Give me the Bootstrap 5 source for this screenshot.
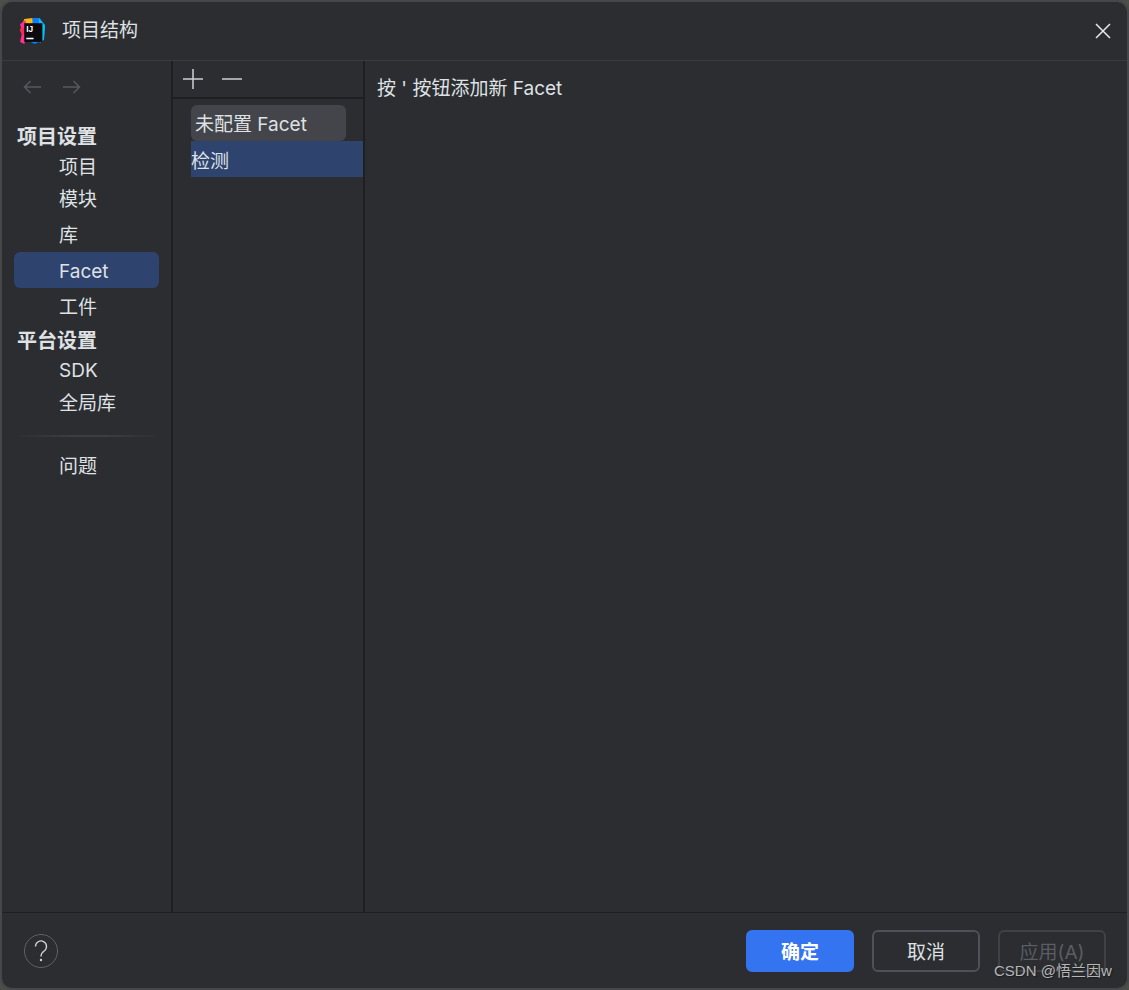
<!DOCTYPE html>
<html lang="zh">

<head>
    <meta charset="UTF-8">
    <meta name="viewport" content="width=device-width, initial-scale=1">
    <title>项目结构</title>
    <link href="https://cdn.jsdelivr.net/npm/bootstrap@5.3.3/dist/css/bootstrap.min.css" rel="stylesheet">
    <style>
        html, body { height: 100%; }
        body {
            background: #4a5048;
            overflow: hidden;
            font-family: "Inter", "Noto Sans CJK SC", sans-serif;
            font-size: 19px;
            color: #dfe1e5;
        }
        .ide-window {
            width: 1129px;
            height: 990px;
            background: #2b2d30;
            border: 2px solid #45474a;
            border-radius: 12px;
        }
        .title-bar { height: 59px; border-bottom: 1px solid #393b40; }
        .title-text { margin-left: 17px; }
        .side-pane { width: 171px; border-right: 2px solid #1e1f22; }
        .mid-pane { width: 192px; border-right: 2px solid #1e1f22; }
        .arrow-row { height: 61px; padding: 0 0 9px 21px; gap: 20px; }
        .side-head { height: 30px; padding-left: 15px; font-size: 20px; font-weight: 700; line-height: 31px; }
        .side-head.second { height: 32px; line-height: 34px; }
        .side-item { height: 36px; line-height: 40px; padding-left: 57px; }
        .side-item.first { height: 28px; line-height: 32px; }
        .side-item.tight { height: 29px; line-height: 29px; }
        .side-item.global { line-height: 38px; }
        .side-item.last { line-height: 36px; }
        .side-item.active-item {
            background: #2e436e;
            border-radius: 6px;
            margin: 0 12px;
            padding-left: 45px;
        }
        .side-rule {
            height: 2px;
            margin: 14px 8px 12px 12px;
            background: linear-gradient(90deg, #2b2d30, #3c3e43 40%, #3c3e43 60%, #2b2d30);
        }
        .mid-tools { height: 38px; border-bottom: 2px solid #1e1f22; padding-left: 10px; gap: 19px; }
        .mid-list { padding: 6px 0 0 18px; }
        .facet-tag {
            width: 155px;
            height: 36px;
            line-height: 39px;
            background: #43454a;
            border-radius: 6px;
            padding-left: 4px;
        }
        .facet-pick { height: 36px; line-height: 41px; background: #2e436e; }
        .main-hint { padding: 13px 0 0 12px; line-height: 30px; }
        .foot-bar { height: 76px; border-top: 1px solid #1e1f22; padding: 0 21px 0 22px; }
        .help-ring { width: 34px; height: 34px; }
        .dlg-btn {
            width: 108px;
            height: 42px;
            padding: 6px 0 0;
            font-size: 19px;
            border-radius: 6px;
            color: #dfe1e5;
            background: transparent;
            border: 2px solid #4e5157;
        }
        .dlg-btn.ok { background: #3574f0; border-color: #3574f0; color: #fff; font-weight: 700; }
        .dlg-btn.off { border-color: #3f4145; color: #5a5d63; opacity: 1; }
        .dlg-gap { gap: 18px; }
        .csdn-mark {
            position: absolute;
            left: 994px;
            top: 961px;
            font-family: "Liberation Sans", "Noto Sans CJK SC", sans-serif;
            font-size: 15px;
            line-height: 20px;
            color: #b4b6b8;
            text-shadow: 1px 1px 1px #1c1d1f;
        }
    </style>
</head>

<body>
    <div class="ide-window d-flex flex-column overflow-hidden">
        <!-- barra de titulo -->
        <div class="title-bar d-flex align-items-center flex-shrink-0">
            <svg class="ms-3" width="27" height="27" viewBox="0 0 26 26">
                <polygon points="6,1 14,0 15,8 2,13" fill="#fdb60d"/>
                <polygon points="2,6 7,2 10,14 6,25 2,23 4,14" fill="#ff318c"/>
                <polygon points="2,10 9,9 9,17 3,15" fill="#fe2857"/>
                <polygon points="14,0 21,0 26,7 25,21 16,25 10,22 14,12" fill="#087cfa"/>
                <polygon points="20,0 26,7 25,21 21,24" fill="#07c3f2"/>
                <rect x="6" y="5" width="17.500" height="18" fill="#0b0b0f"/>
                <text x="8" y="13" font-family="Liberation Sans" font-size="8" font-weight="700" fill="#fff">IJ</text>
                <rect x="8" y="19" width="7" height="1.500" fill="#fff"/>
            </svg>
            <span class="title-text">项目结构</span>
            <svg class="ms-auto me-3" width="16" height="16" viewBox="0 0 16 16">
                <path d="M1 1 15 15M15 1 1 15" stroke="#e8e9eb" stroke-width="1.500" fill="none"/>
            </svg>
        </div>

        <div class="d-flex flex-grow-1">
            <!-- menu lateral -->
            <div class="side-pane flex-shrink-0">
                <div class="arrow-row d-flex align-items-center">
                    <svg width="19" height="14" viewBox="0 0 19 14"><path d="M18 7H1.500M7.500 1 1.500 7l6 6" stroke="#55585d" stroke-width="1.500" fill="none"/></svg>
                    <svg width="19" height="14" viewBox="0 0 19 14"><path d="M1 7h16.500M11.500 1l6 6-6 6" stroke="#55585d" stroke-width="1.500" fill="none"/></svg>
                </div>
                <div class="side-head">项目设置</div>
                <div class="side-item first">项目</div>
                <div class="side-item">模块</div>
                <div class="side-item">库</div>
                <div class="side-item active-item">Facet</div>
                <div class="side-item">工件</div>
                <div class="side-head second">平台设置</div>
                <div class="side-item tight">SDK</div>
                <div class="side-item global">全局库</div>
                <div class="side-rule"></div>
                <div class="side-item last">问题</div>
            </div>

            <!-- lista de facets -->
            <div class="mid-pane flex-shrink-0">
                <div class="mid-tools d-flex align-items-center">
                    <svg width="20" height="20" viewBox="0 0 20 20"><path d="M10 0V20M0 10H20" stroke="#ced0d6" stroke-width="1.500" fill="none"/></svg>
                    <svg width="20" height="20" viewBox="0 0 20 20"><path d="M0 10H20" stroke="#ced0d6" stroke-width="1.500" fill="none"/></svg>
                </div>
                <div class="mid-list">
                    <div class="facet-tag">未配置 Facet</div>
                    <div class="facet-pick">检测</div>
                </div>
            </div>

            <div class="main-hint flex-grow-1">按 ' 按钮添加新 Facet</div>
        </div>

        <!-- botones -->
        <div class="foot-bar d-flex align-items-center flex-shrink-0">
            <svg class="help-ring" viewBox="0 0 34 34">
                <circle cx="17" cy="17" r="16.500" stroke="#5f6266" fill="none"/>
                <path d="M11.500 12.500a5.500 5.500 0 1 1 8.600 4.500c-2 1.400-3.100 2.400-3.100 5.500" stroke="#ced0d6" stroke-width="1.400" fill="none"/>
                <circle cx="17" cy="26" r="1.200" fill="#ced0d6"/>
            </svg>
            <div class="ms-auto d-flex dlg-gap">
                <button type="button" class="btn dlg-btn ok">确定</button>
                <button type="button" class="btn dlg-btn">取消</button>
                <button type="button" class="btn dlg-btn off" disabled>应用(A)</button>
            </div>
        </div>
    </div>
    <div class="csdn-mark">CSDN @悟兰因w</div>

    <script src="https://cdn.jsdelivr.net/npm/bootstrap@5.3.3/dist/js/bootstrap.bundle.min.js"></script>
</body>

</html>
